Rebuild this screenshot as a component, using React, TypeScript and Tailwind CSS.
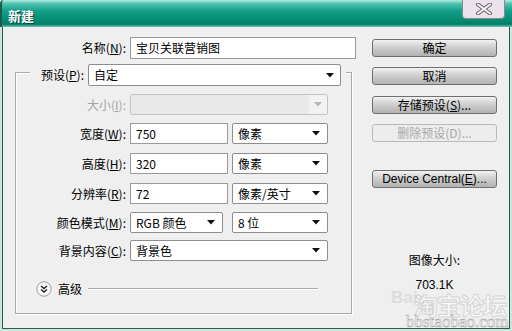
const Arrow = ({ disabled = false }: { disabled?: boolean }) => (
  <svg width="8" height="5" viewBox="0 0 8 5" className="shrink-0">
    <path d="M0 0H8L4 4.5Z" fill={disabled ? "#b4b4b4" : "#111"} />
  </svg>
);

const Select = ({ value, w }: { value: string; w: string }) => (
  <div
    className={`${w} h-[21px] bg-white border border-[#8e8e8e] rounded-[2px] flex items-center justify-between pl-[5px] pr-[7px] shrink-0`}
  >
    <span>{value}</span>
    <Arrow />
  </div>
);

const Input = ({ value, w }: { value: string; w: string }) => (
  <div
    className={`${w} h-[21px] bg-white border border-[#9a9a9a] flex items-center pl-[5px] shrink-0`}
  >
    {value}
  </div>
);

const Label = ({ text, k, w = "w-[114px]", disabled = false }: { text: string; k: string; w?: string; disabled?: boolean }) => (
  <span className={`${w} text-right pr-[4px] shrink-0 ${disabled ? "text-[#a5a5a5]" : ""}`}>
    {text}(<u>{k}</u>):
  </span>
);

const Button = ({ children, disabled = false, mt }: { children: React.ReactNode; disabled?: boolean; mt: string }) => (
  <div
    className={`${mt} h-[18px] rounded-[3px] border flex items-center justify-center leading-none ${
      disabled
        ? "border-[#b9b9b9] bg-[#ededed] text-[#a8a8a8]"
        : "border-[#6f6f6f] bg-[linear-gradient(to_bottom,#f3f3f3_0%,#d6d6d6_35%,#c2c2c2_70%,#b3b3b3_100%)] text-black"
    }`}
  >
    {children}
  </div>
);

export default function App() {
  return (
    <div className="w-[512px] h-[331px] bg-[#cde6dc] flex flex-col relative overflow-hidden font-['Microsoft_YaHei','Noto_Sans_CJK_SC',sans-serif] text-[12px] text-black">
      {/* title bar */}
      <div className="h-[27px] shrink-0 flex justify-between rounded-tl-[4px] bg-[linear-gradient(to_bottom,#b2ebe0_0%,#4fc2ad_14%,#13a089_40%,#058b73_75%,#077d68_90%,#6cc9b7_100%)] border-l-2 border-[#1f5b4d]">
        <span className="pl-[6px] pt-[7px] text-white font-bold text-[13px] leading-[18px] [text-shadow:1px_1px_0_#0a4a3e]">
          新建
        </span>
        <div className="mr-[7px] w-[43px] h-[19px] bg-[#ece0ec] border border-t-0 border-[#8a8a8a] rounded-b-[4px] flex items-center justify-center">
          <svg width="18" height="12" viewBox="0 0 18 12">
            <path d="M3 1.5L15 10.5M15 1.5L3 10.5" stroke="#6a6a6a" strokeWidth="4" strokeLinecap="round" />
            <path d="M3 1.5L15 10.5M15 1.5L3 10.5" stroke="#f7f2f7" strokeWidth="2" strokeLinecap="round" />
          </svg>
        </div>
      </div>

      {/* body */}
      <div className="flex-1 ml-[2px] mr-[2px] mb-[2px] border-x border-b border-[#2b5a4d] bg-[#efefef] flex">
        <div className="w-[353px] shrink-0 flex flex-col">
          <div className="mt-[10px] flex items-center">
            <span className="w-[127px] text-right pr-[4px] shrink-0">
              名称(<u>N</u>):
            </span>
            <div className="w-[226px] h-[22px] bg-white border border-[#9a9a9a] flex items-center pl-[5px]">
              宝贝关联营销图
            </div>
          </div>

          {/* group box */}
          <div className="ml-[12px] mt-[13px] w-[337px] h-[242px] border border-[#a9a9a9] shadow-[inset_1px_1px_0_#fff,1px_1px_0_#fff] flex flex-col">
            <div className="-mt-[9px] ml-[14px] w-[316px] h-[22px] bg-[#efefef] flex items-center pl-[2px]">
              <Label text="预设" k="P" w="w-[56px]" />
              <div className="w-[253px] h-[22px] bg-white border border-[#8e8e8e] rounded-[2px] flex items-center justify-between pl-[5px] pr-[6px]">
                <span>自定</span>
                <Arrow />
              </div>
            </div>

            <div className="mt-[8px] flex items-center">
              <Label text="大小" k="I" disabled />
              <div className="w-[198px] h-[21px] bg-[#e9e9e9] border border-[#c4c4c4] rounded-[2px] flex items-center justify-end">
                <div className="w-[18px] h-full bg-[#f2f2f2] flex items-center justify-center">
                  <Arrow disabled />
                </div>
              </div>
            </div>

            <div className="mt-[8px] flex items-center">
              <Label text="宽度" k="W" />
              <Input value="750" w="w-[98px]" />
              <div className="ml-[4px]">
                <Select value="像素" w="w-[96px]" />
              </div>
            </div>

            <div className="mt-[9px] flex items-center">
              <Label text="高度" k="H" />
              <Input value="320" w="w-[98px]" />
              <div className="ml-[4px]">
                <Select value="像素" w="w-[96px]" />
              </div>
            </div>

            <div className="mt-[9px] flex items-center">
              <Label text="分辨率" k="R" />
              <Input value="72" w="w-[98px]" />
              <div className="ml-[4px]">
                <Select value="像素/英寸" w="w-[96px]" />
              </div>
            </div>

            <div className="mt-[8px] flex items-center">
              <Label text="颜色模式" k="M" />
              <Select value="RGB 颜色" w="w-[93px]" />
              <div className="ml-[9px]">
                <Select value="8 位" w="w-[96px]" />
              </div>
            </div>

            <div className="mt-[7px] flex items-center">
              <Label text="背景内容" k="C" />
              <Select value="背景色" w="w-[198px]" />
            </div>

            <div className="mt-[20px] ml-[20px] mr-[33px] flex items-center h-[16px]">
              <svg width="16" height="16" viewBox="0 0 16 16" className="shrink-0">
                <circle cx="8" cy="8" r="7.2" fill="#fafafa" stroke="#9c9c9c" />
                <path d="M5 5L8 7.5L11 5M5 8.5L8 11L11 8.5" stroke="#222" strokeWidth="1.4" fill="none" />
              </svg>
              <span className="ml-[6px]">高级</span>
              <div className="ml-[6px] flex-1 h-[2px] border-t border-[#a9a9a9] border-b border-b-white" />
            </div>
          </div>
        </div>

        {/* right column */}
        <div className="ml-[16px] w-[125px] shrink-0 flex flex-col pt-[12px]">
          <Button mt="mt-0">确定</Button>
          <Button mt="mt-[10px]">取消</Button>
          <Button mt="mt-[11px]">
            存储预设(<u>S</u>)...
          </Button>
          <Button mt="mt-[10px]" disabled>
            删除预设(D)...
          </Button>
          <Button mt="mt-[28px]">
            <span className="font-['Liberation_Sans',sans-serif]">
              Device Central(<u>E</u>)...
            </span>
          </Button>
          <div className="mt-[64px] text-center leading-[16px]">图像大小:</div>
          <div className="mt-[9px] text-center leading-[16px] font-['Liberation_Sans',sans-serif]">703.1K</div>
        </div>
      </div>

      {/* watermark */}
      <div className="absolute left-[391px] top-[289px] text-[17px] font-bold text-[#d2d2d2] opacity-60 font-['Liberation_Sans',sans-serif] leading-none pointer-events-none">
        Bai
      </div>
      <div className="absolute left-[414px] top-[293px] text-[24px] font-bold text-white opacity-60 leading-none tracking-[-1px] [-webkit-text-stroke:1px_#c4c4c4] pointer-events-none">
        淘宝论坛
      </div>
      <div className="absolute left-[406px] top-[313px] text-[17px] text-white leading-none font-['Liberation_Serif',serif] [-webkit-text-stroke:0.5px_#a0a0a0] pointer-events-none">
        bbstaobao.com
      </div>
    </div>
  );
}
